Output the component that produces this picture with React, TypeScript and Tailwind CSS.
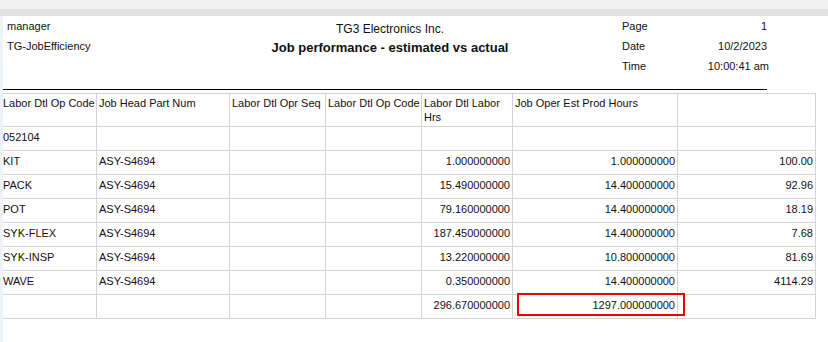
const columns = [
  { title: 'Labor Dtl Op Code', width: 'w-[94px]', align: 'text-left' },
  { title: 'Job Head Part Num', width: 'w-[133px]', align: 'text-left' },
  { title: 'Labor Dtl Opr Seq', width: 'w-[96px]', align: 'text-left' },
  { title: 'Labor Dtl Op Code', width: 'w-[96px]', align: 'text-left' },
  { title: 'Labor Dtl Labor Hrs', width: 'w-[91px]', align: 'text-right' },
  { title: 'Job Oper Est Prod Hours', width: 'w-[165px]', align: 'text-right' },
  { title: '', width: 'w-[138px]', align: 'text-right' },
];

const rows: string[][] = [
  ['052104', '', '', '', '', '', ''],
  ['KIT', 'ASY-S4694', '', '', '1.000000000', '1.000000000', '100.00'],
  ['PACK', 'ASY-S4694', '', '', '15.490000000', '14.400000000', '92.96'],
  ['POT', 'ASY-S4694', '', '', '79.160000000', '14.400000000', '18.19'],
  ['SYK-FLEX', 'ASY-S4694', '', '', '187.450000000', '14.400000000', '7.68'],
  ['SYK-INSP', 'ASY-S4694', '', '', '13.220000000', '10.800000000', '81.69'],
  ['WAVE', 'ASY-S4694', '', '', '0.350000000', '14.400000000', '4114.29'],
];

const totals = ['', '', '', '', '296.670000000', '1297.000000000', ''];

export default function App() {
  return (
    <div className="w-[828px] h-[342px] bg-white overflow-hidden text-[#111] font-['Liberation_Sans',Arial,sans-serif]">
      {/* viewer toolbar bands */}
      <div className="h-[9px] bg-[#f0f0f0]" />
      <div className="h-[7px] bg-[#e1e1e1]" />

      <div className="flex">
        <div className="w-[3px] h-[326px] bg-[#eef2f9]" />

        <div className="flex-1">
          {/* report header */}
          <div className="flex h-[73px] text-[11px] leading-[20px]">
            <div className="w-[157px] pl-1">
              <div>manager</div>
              <div>TG-JobEfficiency</div>
            </div>
            <div className="w-[460px] text-center pt-[3px]">
              <div className="text-[12px] leading-[20px]">TG3 Electronics Inc.</div>
              <div className="text-[13px] leading-[18px] font-bold">Job performance - estimated vs actual</div>
            </div>
            <div className="w-[147px] pl-[2px]">
              <div className="flex justify-between"><span>Page</span><span>1</span></div>
              <div className="flex justify-between"><span>Date</span><span>10/2/2023</span></div>
              <div className="flex justify-between"><span>Time</span><span className="-mr-[2px]">10:00:41 am</span></div>
            </div>
          </div>

          <div className="w-[764px] h-px bg-black" />

          {/* detail table */}
          <div className="mt-[3px] w-[813px] border-t border-[#d4d4d4] text-[11px] leading-[14px]">
            <div className="flex">
              {columns.map((c, i) => (
                <div
                  key={i}
                  className={`${c.width} h-[33px] border-r border-b border-[#d4d4d4] text-left pt-[2px] pr-px whitespace-pre-line ${i === 0 ? 'pl-0' : 'pl-[2px]'}`}
                >
                  {i === 4 ? 'Labor Dtl Labor\nHrs' : c.title}
                </div>
              ))}
            </div>

            {rows.map((r, ri) => (
              <div key={ri} className="flex">
                {r.map((v, ci) => (
                  <div
                    key={ci}
                    className={`${columns[ci].width} h-[24px] border-r border-b border-[#d4d4d4] pt-[3px] pr-[2px] ${columns[ci].align} ${ci === 0 ? 'pl-0' : 'pl-[2px]'}`}
                  >
                    {v}
                  </div>
                ))}
              </div>
            ))}

            <div className="flex">
              {totals.map((v, ci) => (
                <div
                  key={ci}
                  className={`${columns[ci].width} h-[24px] border-r border-b border-[#d4d4d4] pt-[3px] pl-[2px] pr-[2px] ${columns[ci].align} ${ci === 5 ? 'relative' : ''}`}
                >
                  {v}
                  {ci === 5 && (
                    <div className="absolute left-[4px] top-[-2px] w-[168px] h-[23px] border-2 border-[#ee0000]" />
                  )}
                </div>
              ))}
            </div>
          </div>
        </div>
      </div>
    </div>
  );
}
